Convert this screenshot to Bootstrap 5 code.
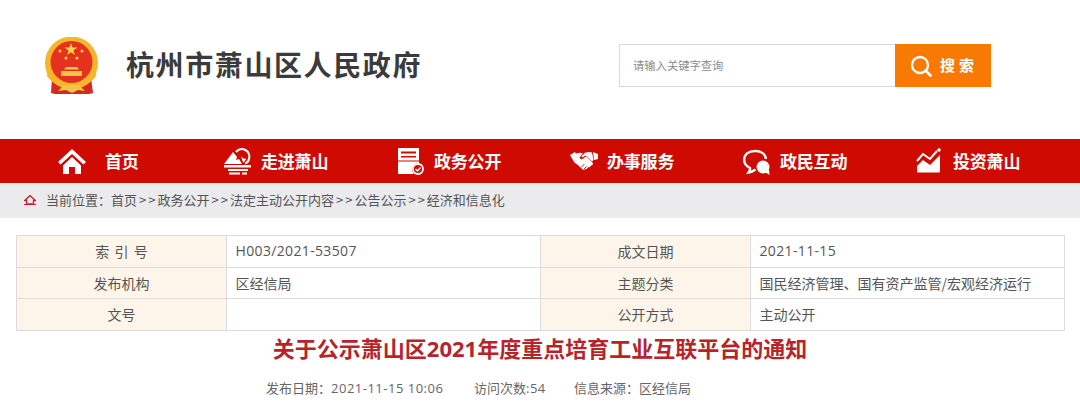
<!DOCTYPE html>
<html lang="zh-CN">
<head>
<meta charset="utf-8">
<title>杭州市萧山区人民政府</title>
<link href="https://cdn.jsdelivr.net/npm/bootstrap@5.3.0/dist/css/bootstrap.min.css" rel="stylesheet">
<style>
html,body{background:#fff;overflow:hidden}
body{font-family:"Noto Sans CJK SC","Liberation Sans",sans-serif;color:#555;width:1080px;height:410px}
.top-head{height:139px;padding:37px 89px 0 44px}
.site-name{font-size:28px;font-weight:700;color:#3b3b3b;letter-spacing:1.6px;line-height:1;margin-left:26px;margin-top:13px;white-space:nowrap}
.search-wrap{width:372px;height:43px;margin-top:7px}
.search-wrap .form-control{border:1px solid #d9d9d9;border-right:0;border-radius:0;font-size:11.3px;padding:0 0 2px 13px;color:#888;height:43px;box-shadow:none}
.search-wrap .form-control::placeholder{color:#8c8c8c}
.search-go{width:96px;height:43px;background:#f97905;border:0;border-radius:0;color:#fff;font-weight:700;font-size:15px;letter-spacing:4px;padding:0 0 0 2px}
.red-nav{height:44px;background:#cf0a00;padding-left:58px;flex-wrap:nowrap}
.red-nav .nav-link{padding:0;color:#fff;font-weight:700;font-size:17px;letter-spacing:-.2px;width:173px;flex:none;white-space:nowrap}
.red-nav .nav-link.first-item{width:166px}
.ico-slot{width:28px;height:28px;flex:none}
.gap-a{margin-right:19px}.gap-b{margin-right:10px}.gap-c{margin-right:9px}.gap-d{margin-right:9px}
.crumb-bar{height:35px;background:#ebebed;padding:0 0 2px 24px;font-size:13px;color:#555;white-space:nowrap;word-spacing:-.9px}
.crumb-bar svg{margin-right:10px}
.info-wrap{padding:17px 15px 0 16px}
.info-table{table-layout:fixed;width:1048px;font-size:14px;margin:0;border-color:#dcdcdc;--bs-table-color:#555;--bs-table-bg:#fff}
.info-table td{height:31.67px;padding:0 8.500px;vertical-align:middle;line-height:1.2;border-color:#dcdcdc}
.info-table .lbl{background:#fdf5ea;text-align:center;padding:0;--bs-table-bg:#fdf5ea}
.info-table .lbl-wide{word-spacing:2px}
.num-txt{font-family:"Open Sans",sans-serif;letter-spacing:.35px}
.w-a{width:210px}.w-b{width:314px}.w-c{width:210px}.w-d{width:314px}
.doc-title{font-size:22px;font-weight:700;color:#b8232a;text-align:center;line-height:1;margin:5px 0 0}
.doc-title .yr{font-family:"Open Sans",sans-serif;font-weight:700}
.doc-meta{font-size:13px;color:#666;padding-left:266px;margin-top:22px;line-height:1;white-space:nowrap}
.doc-meta .num-txt{letter-spacing:.5px}
.m1{width:208px}.m2{width:100px}
</style>
</head>
<body>
<header class="top-head d-flex align-items-start">
  <svg width="56" height="60" viewBox="0 0 56 60" aria-hidden="true">
    <path d="M8 41h39l2 15-4 1H11l-4-1z" fill="#d52a1f"/>
    <circle cx="27.500" cy="26" r="26.500" fill="#f6b52b"/>
    <circle cx="27.500" cy="25" r="21" fill="#e5321f"/>
    <path d="M27 6l1.500 4.600h4.900l-4 2.900 1.500 4.600-3.900-2.800-3.900 2.800 1.500-4.600-4-2.900h4.900z" fill="#f9d24a"/>
    <g fill="#f9d24a"><circle cx="16" cy="14" r="1.500"/><circle cx="38" cy="14" r="1.500"/><circle cx="22" cy="21" r="1.500"/><circle cx="33" cy="21" r="1.500"/></g>
    <path d="M22 30h11l2 2.500H20zM17 34h21v5H17z" fill="#f6c344"/>
    <path d="M4 37c6 9 15 12 23.500 12S45 46 51 37" fill="none" stroke="#f6b52b" stroke-width="4"/>
    <path d="M14 54l6-6h15l6 6-7-1-6 3-6-3z" fill="#f6c344"/>
  </svg>
  <div class="site-name">杭州市萧山区人民政府</div>
  <div class="input-group search-wrap ms-auto flex-nowrap">
    <input type="text" class="form-control" placeholder="请输入关键字查询" aria-label="搜索">
    <button class="btn search-go d-flex align-items-center justify-content-center gap-2" type="button">
      <svg width="22" height="22" viewBox="0 0 22 22" aria-hidden="true"><circle cx="10" cy="10" r="8" fill="none" stroke="#fff" stroke-width="2.300"/><path d="M15.500 15.500l5 5" stroke="#fff" stroke-width="2.600" stroke-linecap="round"/></svg>
      <span>搜索</span>
    </button>
  </div>
</header>

<nav class="nav red-nav">
  <a class="nav-link first-item d-flex align-items-center" href="#">
    <svg class="ico-slot gap-a" viewBox="0 0 28 28" aria-hidden="true"><path d="M14 2L0 15l2.500 2.500L14 7l11.500 10.500L28 15z" fill="#fff"/><path d="M5 18.500L14 10l9 8.500V27h-6v-7h-6v7H5z" fill="#fff"/></svg>首页</a>
  <a class="nav-link d-flex align-items-center" href="#">
    <svg class="ico-slot gap-c" viewBox="0 0 28 28" aria-hidden="true"><path d="M0 17L9 5l4 5-1 3 3-1 3 5z" fill="#fff"/><path d="M12 5a7.500 7.500 0 0 1 13 7c-.5 2-2 4-4 4.500" fill="none" stroke="#fff" stroke-width="2.200"/><path d="M17 9c1 2 3 3 5 2.500-.5 2-1.500 3.500-3 4z" fill="#fff"/><path d="M0 18h27v2.500H0zM4 22h20v2H4zM5 25.500h11v2H5zM18 25.500h5v2h-5z" fill="#fff"/></svg>走进萧山</a>
  <a class="nav-link d-flex align-items-center" href="#">
    <svg class="ico-slot gap-c" viewBox="0 0 28 28" aria-hidden="true"><path d="M1 1h21v15a6.500 6.500 0 0 0-5 11H1z" fill="#fff"/><path d="M4 4.500h15v2H4zM4 9h15v1.500H4zM1 13.500h21v1H1z" fill="#cf0a00"/><circle cx="21" cy="22" r="5" fill="none" stroke="#fff" stroke-width="1.800"/><path d="M18.500 22l2 2 3-3.500" fill="none" stroke="#fff" stroke-width="1.500"/></svg>政务公开</a>
  <a class="nav-link d-flex align-items-center" href="#">
    <svg class="ico-slot gap-d" viewBox="0 0 28 28" aria-hidden="true"><path d="M0 8l5-3 4 7-5 3z" fill="#fff"/><path d="M23 5l5 2v5l-4 1z" fill="#fff"/><path d="M6 6.500c3-1 5-1 7 0l-3.500 4 1.500 2c2-.5 3.500-2 5-3l7 6.500-.5 2-1.500.5-1 1.500-2 .5-1 1.500-2 .3-1.500 1-6-5.500-3.500-2.500 2.500-2z" fill="#fff"/><path d="M14.500 6c2.500-1 5-1.500 7.500-.5l1.500 7.500-1.500 1.500-6.500-6-3 2-1-1z" fill="#fff"/><path d="M11 20.500l3.500-3.500M13.500 22.500l3-3M16.500 23l2-2.500" stroke="#cf0a00" stroke-width=".9"/></svg>办事服务</a>
  <a class="nav-link d-flex align-items-center" href="#">
    <svg class="ico-slot gap-c" viewBox="0 0 28 28" aria-hidden="true"><path d="M12.500 22.500c-2 1.500-4 2.500-7 3 1-1.500 2-3 1.500-4.500C3 19 1.200 16 1.200 13 1.200 7 6 4 12 4s10.500 3 11 8" fill="none" stroke="#fff" stroke-width="2.400"/><circle cx="20" cy="20" r="6.500" fill="#fff"/><path d="M22 25l4.500 3-.5-5.500z" fill="#fff"/></svg>政民互动</a>
  <a class="nav-link d-flex align-items-center" href="#">
    <svg class="ico-slot gap-c" viewBox="0 0 28 28" aria-hidden="true"><path d="M1 14l6-7 7 5 7-8" fill="none" stroke="#fff" stroke-width="2"/><circle cx="23" cy="3" r="1.800" fill="#fff"/><path d="M1 19l6-6 7 5 10-10v16.500a1 1 0 0 1-1 1H2a1 1 0 0 1-1-1z" fill="#fff"/></svg>投资萧山</a>
</nav>

<div class="crumb-bar d-flex align-items-center">
  <svg width="12" height="10" viewBox="0 0 12 10" aria-hidden="true"><path d="M6 .5L.8 5.500h1.700V9h7V5.500h1.700z" fill="none" stroke="#c8202a" stroke-width="1.300"/><path d="M0 9h12v1H0z" fill="#c8202a"/></svg>
  <span>当前位置：首页 &gt; &gt; 政务公开 &gt; &gt; 法定主动公开内容 &gt; &gt; 公告公示 &gt; &gt; 经济和信息化</span>
</div>

<main>
  <div class="info-wrap">
    <table class="table table-bordered info-table">
      <colgroup><col class="w-a"><col class="w-b"><col class="w-c"><col class="w-d"></colgroup>
      <tbody>
        <tr><td class="lbl lbl-wide">索 引 号</td><td class="num-txt">H003/2021-53507</td><td class="lbl">成文日期</td><td class="num-txt">2021-11-15</td></tr>
        <tr><td class="lbl">发布机构</td><td>区经信局</td><td class="lbl">主题分类</td><td>国民经济管理、国有资产监管/宏观经济运行</td></tr>
        <tr><td class="lbl">文号</td><td></td><td class="lbl">公开方式</td><td>主动公开</td></tr>
      </tbody>
    </table>
  </div>
  <h1 class="doc-title">关于公示萧山区<span class="yr">2021</span>年度重点培育工业互联平台的通知</h1>
  <div class="doc-meta d-flex">
    <span class="m1">发布日期：<span class="num-txt">2021-11-15 10:06</span></span>
    <span class="m2">访问次数<span class="num-txt">:54</span></span>
    <span>信息来源：区经信局</span>
  </div>
</main>
<script src="https://cdn.jsdelivr.net/npm/bootstrap@5.3.0/dist/js/bootstrap.bundle.min.js"></script>
</body>
</html>
